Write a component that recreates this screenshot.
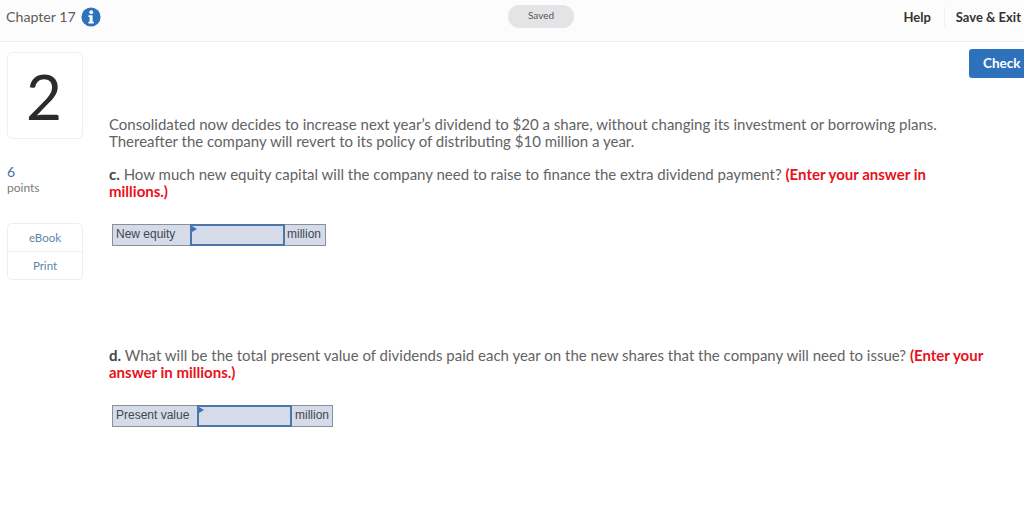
<script>
  const tables = [
    { label: 'New equity', cls: 'a' },
    { label: 'Present value', cls: 'b' }
  ];
</script>

<div class="page">
  <header class="top">
    <div class="chapter">
      <span>Chapter 17</span>
      <svg class="info" width="20" height="20" viewBox="0 0 20 20" aria-hidden="true">
        <circle cx="10" cy="10" r="9.6" fill="#2f72bc" />
        <circle cx="10.2" cy="5.2" r="1.9" fill="#fff" />
        <path d="M7.4 8.2h4.2v6.6h1.2v1.8H7.4v-1.8h1.2V10H7.4z" fill="#fff" />
      </svg>
    </div>
    <div class="saved">Saved</div>
    <nav class="links">
      <span class="help">Help</span>
      <span class="exit">Save &amp; Exit</span>
    </nav>
  </header>

  <div class="body">
    <aside class="side">
      <div class="num">2</div>
      <div class="points"><div class="six">6</div><div class="pts">points</div></div>
      <div class="tools">
        <div class="tool">eBook</div>
        <div class="tool">Print</div>
      </div>
    </aside>

    <main class="main">
      <div class="checkrow"><button class="check">Check</button></div>
      <p class="p1">Consolidated now decides to increase next year’s dividend to $20 a share, without changing its investment or borrowing plans.<br />Thereafter the company will revert to its policy of distributing $10 million a year.</p>
      <p class="p2"><b>c.</b> How much new equity capital will the company need to raise to finance the extra dividend payment? <b class="red">(Enter your answer in<br />millions.)</b></p>
      <div class="entry {tables[0].cls}">
        <span class="lab">{tables[0].label}</span>
        <span class="field"></span>
        <span class="unit">million</span>
      </div>
      <p class="p3"><b>d.</b> What will be the total present value of dividends paid each year on the new shares that the company will need to issue? <b class="red">(Enter your<br />answer in millions.)</b></p>
      <div class="entry {tables[1].cls}">
        <span class="lab">{tables[1].label}</span>
        <span class="field"></span>
        <span class="unit">million</span>
      </div>
    </main>
  </div>
</div>

<style>
  :global(body) { margin: 0; background: #fff; }
  .page {
    width: 1024px; height: 506px; overflow: hidden;
    font-family: "Lato", "Open Sans", "Liberation Sans", sans-serif;
    color: #5a5a5a;
  }
  .top {
    height: 41px;
    border-bottom: 1px solid #eeeeee;
    background: #fcfcfc;
    display: grid; grid-template-columns: 508px 66px 1fr; align-items: center;
  }
  .chapter { display: flex; align-items: center; gap: 5px; padding-left: 6px; padding-bottom: 8px; font-size: 14.2px; color: #5c5c5c; }
  .info { display: block; margin-top: 1px; }
  .saved {
    height: 23px; border-radius: 12px; background: #e4e4e6;
    font-size: 10px; line-height: 21px; color: #555; display: flex; align-items: flex-start; justify-content: center;
    margin-bottom: 9px;
  }
  .links { display: flex; justify-content: flex-end; align-items: center; font-size: 13px; font-weight: 700; color: #333; padding-bottom: 7px; }
  .help { padding-right: 13px; border-right: 1px solid #f0f0f0; line-height: 20px; }
  .exit { padding-left: 11px; padding-right: 3px; line-height: 20px; }

  .body { display: flex; }
  .side { width: 109px; padding: 10px 0 0 7px; box-sizing: border-box; }
  .num {
    width: 76px; height: 87px; box-sizing: border-box; padding-right: 2px;
    border: 1px solid #f0f0f0; border-radius: 5px;
    font-size: 62px; color: #2b2b2b; font-weight: 400;
    display: flex; align-items: center; justify-content: center;
  }
  .points { margin-top: 25px; }
  .six { font-size: 14px; line-height: 16px; color: #41709f; }
  .pts { font-size: 12px; line-height: 15px; color: #7a7a7a; }
  .tools {
    margin-top: 28px; width: 76px; box-sizing: border-box;
    border: 1px solid #eeeeee; border-radius: 5px;
  }
  .tool { height: 27px; display: flex; align-items: center; justify-content: center; font-size: 11.5px; color: #5f84a8; }
  .tool + .tool { border-top: 1px solid #eeeeee; }

  .main { flex: 1; min-width: 0; font-size: 15px; line-height: 17px; color: #636363; }
  .checkrow { display: flex; justify-content: flex-end; padding-top: 7px; height: 67px; }
  .check {
    width: 55px; height: 29px; border: 0; padding: 0 0 2px 14px;
    background: #2f72bc; color: #fff; font: 700 13.5px "Lato", sans-serif;
    border-radius: 3px 0 0 3px; text-align: left; white-space: nowrap; overflow: hidden;
  }
  p { margin: 0; width: 900px; }
  .p2 { margin-top: 16px; }
  .p3 { margin-top: 101px; }
  b { color: #444; }
  .red { color: #e8111b; }
  .entry {
    display: flex; margin: 24px 0 0 3px; height: 22px; width: fit-content;
    box-sizing: border-box; border: 1px solid #8b8f96; background: #d5dbe8;
    font: 12px/19px "Liberation Sans", Arial, sans-serif; color: #43474e;
  }
  .lab { padding-left: 3px; width: 74px; white-space: nowrap; }
  .b .lab { width: 81px; }
  .field {
    width: 95px; height: 22px; margin: -1px 0; box-sizing: border-box;
    border: 2px solid #4d76a8; background: #d5dbe8; position: relative;
  }
  .field::before {
    content: ""; position: absolute; left: 0; top: 0;
    border-left: 5px solid #3a73b5; border-top: 3px solid transparent; border-bottom: 3px solid transparent;
  }
  .unit { padding: 0 4px 0 2px; }
  .b .unit { padding: 0 3px 0 3px; }
</style>
